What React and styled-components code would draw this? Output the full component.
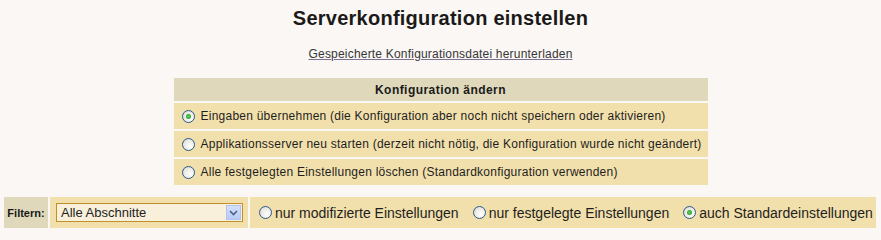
import styled, { createGlobalStyle } from "styled-components";

const GlobalStyle = createGlobalStyle`
  html, body {
    margin: 0;
    padding: 0;
    background: #faf7f4;
  }
  body {
    font-family: "Liberation Sans", Arial, sans-serif;
    color: #1e1e1e;
  }
`;

const Page = styled.div`
  width: 881px;
  display: flex;
  flex-direction: column;
  align-items: center;
`;

const Title = styled.h1`
  margin: 6px 0 0;
  font-size: 20px;
  line-height: 24px;
  letter-spacing: 0.25px;
  font-weight: bold;
  color: #1a1a1a;
`;

const DownloadLink = styled.a`
  margin-top: 16px;
  font-size: 12px;
  line-height: 16px;
  letter-spacing: 0.2px;
  color: #363636;
  text-decoration: underline;
  text-decoration-color: #7d7191;
  cursor: pointer;
`;

const ConfigTable = styled.div`
  margin-top: 16px;
  width: 534px;
  display: grid;
  grid-template-columns: 1fr;
  row-gap: 2px;
`;

const HeaderCell = styled.div`
  height: 23px;
  background: #dfd8bb;
  display: flex;
  align-items: center;
  justify-content: center;
  font-size: 12px;
  letter-spacing: 0.45px;
  font-weight: bold;
  color: #1a1a1a;
`;

const OptionRow = styled.label`
  height: 26px;
  background: #f2e0ac;
  display: flex;
  align-items: center;
  gap: 6px;
  padding-left: 8px;
  font-size: 12px;
  letter-spacing: 0.24px;
  color: #1e1e1e;
  white-space: nowrap;
`;

const Radio = styled.span`
  flex: none;
  width: 11px;
  height: 11px;
  border-radius: 50%;
  border: 1px solid #2a5a8a;
  background: radial-gradient(circle at 65% 65%, #ffffff 0%, #eceae4 55%, #d2d0c8 100%);
  display: flex;
  align-items: center;
  justify-content: center;

  &::after {
    content: "";
    width: 5px;
    height: 5px;
    border-radius: 50%;
    background: ${(p) => (p.$checked ? "radial-gradient(circle, #5fd35f 0%, #21a121 80%)" : "transparent")};
  }
`;

const FilterBar = styled.div`
  margin-top: 12px;
  align-self: stretch;
  margin-left: 4px;
  margin-right: 5px;
  height: 31px;
  display: flex;
  gap: 2px;
`;

const FilterLabel = styled.div`
  width: 44px;
  background: #dfd8bb;
  display: flex;
  align-items: center;
  justify-content: center;
  font-size: 11px;
  font-weight: bold;
  color: #1a1a1a;
`;

const SelectCell = styled.div`
  width: 192px;
  background: #f2e0ac;
  display: flex;
  align-items: center;
  padding-left: 6px;
`;

const SelectBox = styled.div`
  width: 181px;
  height: 17px;
  border: 1px solid #c0902c;
  background: #f8f0da;
  display: flex;
  align-items: center;
  justify-content: space-between;
  font-size: 13px;
  color: #1e1e1e;
  padding-left: 4px;
  box-sizing: content-box;
`;

const DropButton = styled.span`
  width: 15px;
  height: 15px;
  margin-right: 1px;
  background: linear-gradient(#d3e0fc, #b8cbf5);
  border: 1px solid #b2c4ee;
  box-sizing: border-box;
  display: flex;
  align-items: center;
  justify-content: center;
`;

const RadioCell = styled.div`
  flex: 1;
  min-width: 0;
  background: #f2e0ac;
  display: flex;
  align-items: center;
  padding-left: 9px;
  gap: 14px;
`;

const FilterOption = styled.label`
  flex: none;
  display: flex;
  align-items: center;
  gap: 3px;
  font-size: 14px;
  color: #1e1e1e;
  white-space: nowrap;
`;

const options = [
  { text: "Eingaben übernehmen (die Konfiguration aber noch nicht speichern oder aktivieren)", checked: true },
  { text: "Applikationsserver neu starten (derzeit nicht nötig, die Konfiguration wurde nicht geändert)" },
  { text: "Alle festgelegten Einstellungen löschen (Standardkonfiguration verwenden)" },
];

const filters = [
  { text: "nur modifizierte Einstellungen" },
  { text: "nur festgelegte Einstellungen" },
  { text: "auch Standardeinstellungen", checked: true },
];

const App = () => {
  return (
    <>
      <GlobalStyle />
      <Page>
        <Title>Serverkonfiguration einstellen</Title>
        <DownloadLink>Gespeicherte Konfigurationsdatei herunterladen</DownloadLink>
        <ConfigTable>
          <HeaderCell>Konfiguration ändern</HeaderCell>
          {options.map((o) => (
            <OptionRow key={o.text}>
              <Radio $checked={o.checked} />
              {o.text}
            </OptionRow>
          ))}
        </ConfigTable>
        <FilterBar>
          <FilterLabel>Filtern:</FilterLabel>
          <SelectCell>
            <SelectBox>
              Alle Abschnitte
              <DropButton>
                <svg width="9" height="6" viewBox="0 0 9 6">
                  <path d="M1 1 L4.5 4.5 L8 1" fill="none" stroke="#4a5f88" strokeWidth="1.6" />
                </svg>
              </DropButton>
            </SelectBox>
          </SelectCell>
          <RadioCell>
            {filters.map((f) => (
              <FilterOption key={f.text}>
                <Radio $checked={f.checked} />
                {f.text}
              </FilterOption>
            ))}
          </RadioCell>
        </FilterBar>
      </Page>
    </>
  );
};

export default App;
